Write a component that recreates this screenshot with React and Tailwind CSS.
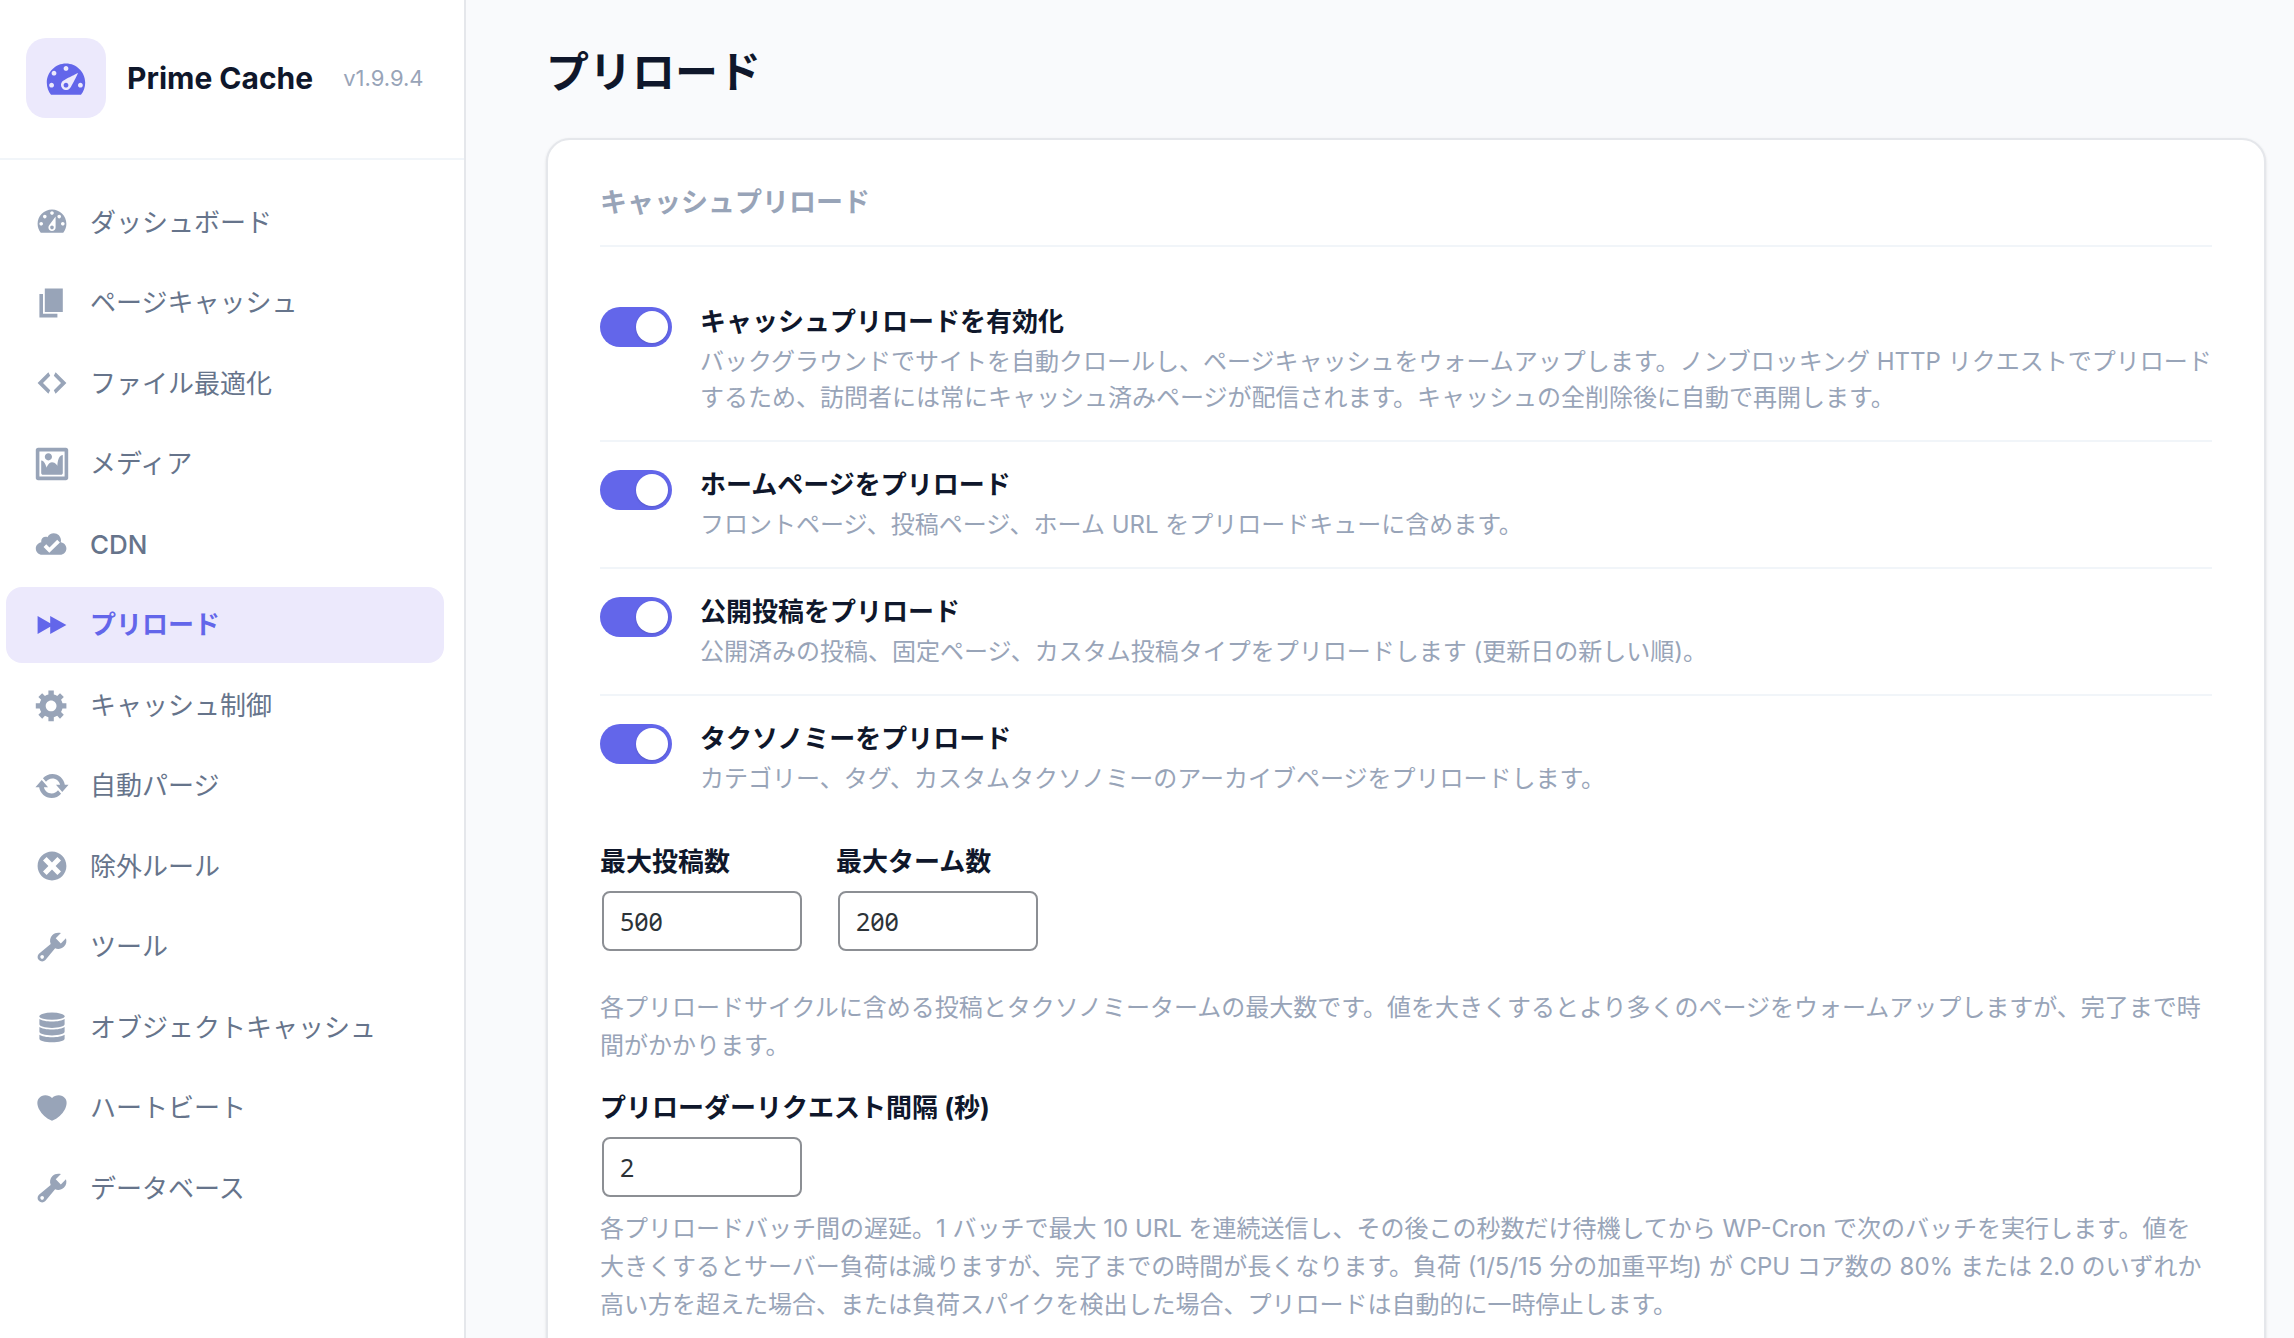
import { useState } from 'react';
import clsx from 'clsx';

const Icon = ({ className, children }) => (
  <svg viewBox="0 0 20 20" fill="currentColor" className={className} aria-hidden="true">
    {children}
  </svg>
);

const GaugeLogo = () => (
  <Icon className="size-12">
    <path d="M3.76 17.01h12.48C17.34 15.63 18 13.9 18 12c0-4.41-3.58-8-8-8s-8 3.59-8 8c0 1.9.66 3.63 1.76 5.01zM9 6c0-.55.45-1 1-1s1 .45 1 1c0 .56-.45 1-1 1s-1-.44-1-1zM4 8c0-.55.45-1 1-1s1 .45 1 1c0 .56-.45 1-1 1s-1-.44-1-1zm4.52 3.4c.84-.83 6.51-3.5 6.51-3.5s-2.66 5.68-3.49 6.51c-.84.84-2.18.84-3.02 0-.83-.83-.83-2.18 0-3.01zM3 13c0-.55.45-1 1-1s1 .45 1 1c0 .56-.45 1-1 1s-1-.44-1-1zm6 0c0 .56.45 1 1 1 .56 0 1-.44 1-1 0-.55-.44-1-1-1-.55 0-1 .45-1 1zm6 0c0-.55.45-1 1-1s1 .45 1 1c0 .56-.45 1-1 1s-1-.44-1-1z" />
  </Icon>
);

const wrench = (
  <path d="M16.68 9.77c-1.34 1.34-3.3 1.67-4.95.99l-5.41 6.52c-.99.99-2.59.99-3.58 0s-.99-2.59 0-3.57l6.52-5.42c-.68-1.65-.35-3.61.99-4.95 1.28-1.28 3.12-1.62 4.72-1.06l-2.89 2.89 2.82 2.82 2.86-2.87c.53 1.58.18 3.39-1.08 4.65zM3.81 16.21c.4.39 1.04.39 1.43 0 .4-.4.4-1.04 0-1.43-.39-.4-1.03-.4-1.43 0-.39.39-.39 1.03 0 1.43z" />
);

const navItems = [
  {
    id: 'dashboard',
    label: 'ダッシュボード',
    icon: (
      <path d="M3.76 16h12.48c1.1-1.37 1.76-3.11 1.76-5 0-4.42-3.58-8-8-8s-8 3.58-8 8c0 1.89.66 3.63 1.76 5zM10 4c.55 0 1 .45 1 1s-.45 1-1 1-1-.45-1-1 .45-1 1-1zM6 6c.55 0 1 .45 1 1s-.45 1-1 1-1-.45-1-1 .45-1 1-1zm8 0c.55 0 1 .45 1 1s-.45 1-1 1-1-.45-1-1 .45-1 1-1zm-5.37 5.55L12 7v6c0 1.1-.9 2-2 2s-2-.9-2-2c0-.57.24-1.08.63-1.45zM4 10c.55 0 1 .45 1 1s-.45 1-1 1-1-.45-1-1 .45-1 1-1zm12 0c.55 0 1 .45 1 1s-.45 1-1 1-1-.45-1-1 .45-1 1-1zm-5 3c0-.55-.45-1-1-1s-1 .45-1 1 .45 1 1 1 1-.45 1-1z" />
    ),
  },
  {
    id: 'page-cache',
    label: 'ページキャッシュ',
    icon: <path d="M6 15V2h10v13H6zm-1 1h8v2H3V5h2v11z" />,
  },
  {
    id: 'files',
    label: 'ファイル最適化',
    icon: <path d="M9 6l-4 4 4 4-1 2-6-6 6-6zm2 8l4-4-4-4 1-2 6 6-6 6z" />,
  },
  {
    id: 'media',
    label: 'メディア',
    icon: (
      <path d="M2.25 1h15.5c.69 0 1.25.56 1.25 1.25v15.5c0 .69-.56 1.25-1.25 1.25H2.25C1.56 19 1 18.44 1 17.75V2.25C1 1.56 1.56 1 2.25 1zM17 17V3H3v14h14zM10 6c0-1.1-.9-2-2-2s-2 .9-2 2 .9 2 2 2 2-.9 2-2zm3 5s0-6 3-6v10c0 .55-.45 1-1 1H5c-.55 0-1-.45-1-1V8c2 0 3 4 3 4s1-3 3-3 3 2 3 2z" />
    ),
  },
  {
    id: 'cdn',
    label: 'CDN',
    icon: (
      <path
        fillRule="evenodd"
        d="M14.8 9c.1-.3.2-.6.2-1 0-2.2-1.8-4-4-4-1.5 0-2.9.9-3.5 2.2-.3-.1-.7-.2-1-.2C5.1 6 4 7.1 4 8.5c0 .2 0 .4.1.5-1.8.3-3.1 1.7-3.1 3.5C1 14.4 2.6 16 4.5 16h10c1.9 0 3.5-1.6 3.5-3.5 0-1.8-1.4-3.3-3.2-3.5zm-6.3 5.9l-3.2-3.2 1.5-1.5 1.8 1.8 4.3-4.3 1.5 1.5-5.9 5.7z"
      />
    ),
  },
  {
    id: 'preload',
    label: 'プリロード',
    icon: <path d="M2 15V5l7 4V5l9 5-9 5v-4z" />,
  },
  {
    id: 'cache-control',
    label: 'キャッシュ制御',
    icon: (
      <path d="M18 12h-2.18c-.17.7-.44 1.35-.81 1.93l1.54 1.54-2.1 2.1-1.54-1.54c-.58.36-1.23.63-1.91.79V19H8v-2.18c-.68-.16-1.33-.43-1.91-.79l-1.54 1.54-2.12-2.12 1.54-1.54c-.36-.58-.63-1.23-.79-1.91H1V9.03h2.17c.16-.7.44-1.35.8-1.94L2.43 5.55l2.1-2.1 1.54 1.54c.58-.37 1.24-.64 1.93-.81V2h3v2.18c.68.16 1.33.43 1.91.79l1.54-1.54 2.12 2.12-1.54 1.54c.36.59.64 1.24.8 1.94H18V12zm-8.5 1.5c1.66 0 3-1.34 3-3s-1.34-3-3-3-3 1.34-3 3 1.34 3 3 3z" />
    ),
  },
  {
    id: 'purge',
    label: '自動パージ',
    icon: (
      <path d="M10.2 3.28c3.53 0 6.43 2.61 6.92 6h2.08l-3.5 4-3.5-4h2.32c-.45-1.97-2.21-3.45-4.32-3.45-1.45 0-2.73.71-3.54 1.78L4.95 5.66C6.23 4.2 8.11 3.28 10.2 3.28zm-.4 13.44c-3.52 0-6.43-2.61-6.92-6H.8l3.5-4c1.17 1.33 2.33 2.67 3.5 4H5.48c.45 1.97 2.21 3.45 4.32 3.45 1.45 0 2.73-.71 3.54-1.78l1.71 1.95c-1.28 1.46-3.15 2.38-5.25 2.38z" />
    ),
  },
  {
    id: 'exclusions',
    label: '除外ルール',
    icon: (
      <path d="M10 2c4.42 0 8 3.58 8 8s-3.58 8-8 8-8-3.58-8-8 3.58-8 8-8zm5 11l-3-3 3-3-2-2-3 3-3-3-2 2 3 3-3 3 2 2 3-3 3 3z" />
    ),
  },
  { id: 'tools', label: 'ツール', icon: wrench },
  {
    id: 'object-cache',
    label: 'オブジェクトキャッシュ',
    icon: (
      <>
        <ellipse cx="10" cy="4" rx="7" ry="2" />
        <path d="M3 5.6c1.2.9 4 1.4 7 1.4s5.8-.5 7-1.4V8.5c0 1.1-3.1 2-7 2s-7-.9-7-2z" />
        <path d="M3 10c1.2.9 4 1.4 7 1.4s5.8-.5 7-1.4v2.7c0 1.1-3.1 2-7 2s-7-.9-7-2z" />
        <path d="M3 14.3c1.2.9 4 1.4 7 1.4s5.8-.5 7-1.4v2.2c0 1.1-3.1 2-7 2s-7-.9-7-2z" />
      </>
    ),
  },
  {
    id: 'heartbeat',
    label: 'ハートビート',
    icon: (
      <path d="M10 17.12c3.33-1.4 5.74-3.79 7.04-6.21 1.28-2.41 1.46-4.81.32-6.25-1.03-1.29-2.37-1.78-3.73-1.74s-2.68.63-3.63 1.46c-.95-.83-2.27-1.42-3.63-1.46s-2.7.45-3.73 1.74c-1.14 1.44-.96 3.84.34 6.25 1.28 2.42 3.69 4.81 7.02 6.21z" />
    ),
  },
  { id: 'database', label: 'データベース', icon: wrench },
];

const toggles = [
  {
    id: 'enable',
    title: 'キャッシュプリロードを有効化',
    description:
      'バックグラウンドでサイトを自動クロールし、ページキャッシュをウォームアップします。ノンブロッキング HTTP リクエストでプリロードするため、訪問者には常にキャッシュ済みページが配信されます。キャッシュの全削除後に自動で再開します。',
  },
  {
    id: 'home',
    title: 'ホームページをプリロード',
    description: 'フロントページ、投稿ページ、ホーム URL をプリロードキューに含めます。',
  },
  {
    id: 'posts',
    title: '公開投稿をプリロード',
    description: '公開済みの投稿、固定ページ、カスタム投稿タイプをプリロードします (更新日の新しい順)。',
  },
  {
    id: 'taxonomies',
    title: 'タクソノミーをプリロード',
    description: 'カテゴリー、タグ、カスタムタクソノミーのアーカイブページをプリロードします。',
  },
];

const Sidebar = () => (
  <aside className="flex w-[466px] shrink-0 flex-col border-r-2 border-gray-200 bg-white">
    <div className="flex h-40 shrink-0 items-start border-b-2 border-slate-100 pt-[38px] pl-[26px]">
      <div className="flex size-20 items-center justify-center rounded-[20px] bg-[#ece9fc] text-[#6366ea]">
        <GaugeLogo />
      </div>
      <div className="ml-[21px] flex h-20 items-center gap-[30px]">
        <span className="text-[30px] font-bold text-slate-900">Prime Cache</span>
        <span className="text-[22px] text-[#98a4b8]">v1.9.9.4</span>
      </div>
    </div>

    <nav className="flex flex-1 flex-col justify-between pt-6 pr-5 pb-28 pl-[6px]">
      {navItems.map(({ id, label, icon }) => {
        const active = id === 'preload';
        return (
          <a
            key={id}
            href={`#${id}`}
            aria-current={active ? 'page' : undefined}
            className={clsx(
              'flex h-[76px] items-center gap-5 rounded-2xl pl-7 text-[26px]',
              active ? 'bg-[#ece9fc] font-bold text-[#6366ea]' : 'text-[#66748b]',
              id === 'cdn' && 'font-medium'
            )}
          >
            <Icon className={clsx('size-9 shrink-0', active ? 'text-[#6366ea]' : 'text-[#98a4b8]')}>{icon}</Icon>
            {label}
          </a>
        );
      })}
    </nav>
  </aside>
);

const ToggleRow = ({ id, title, description, checked, onChange }) => (
  <div className="flex items-start gap-7 border-b-2 border-slate-100 py-6 last:border-b-0">
    <input
      id={id}
      type="checkbox"
      role="switch"
      checked={checked}
      onChange={onChange}
      aria-describedby={`${id}-help`}
      className="mt-1 h-10 w-[72px] shrink-0 cursor-pointer appearance-none rounded-full bg-slate-300 p-1 transition-colors before:block before:size-8 before:rounded-full before:bg-white before:shadow-sm before:transition-transform checked:bg-[#6366ea] checked:before:translate-x-8"
    />
    <div className="flex flex-col gap-[3px]">
      <label htmlFor={id} className="text-[26px] leading-[38px] font-bold text-slate-900">
        {title}
      </label>
      <p id={`${id}-help`} className="text-2xl leading-9 text-[#98a4b8]">
        {description}
      </p>
    </div>
  </div>
);

const NumberField = ({ id, label, defaultValue }) => (
  <div className="flex flex-col items-start gap-[10px]">
    <label htmlFor={id} className="text-[26px] leading-[38px] font-bold text-slate-900">
      {label}
    </label>
    <input
      id={id}
      type="text"
      inputMode="numeric"
      defaultValue={defaultValue}
      className="mx-[2px] h-[60px] w-[200px] rounded-lg border-2 border-[#8c8f94] bg-white px-4 font-['Noto_Sans',sans-serif] text-[25px] text-[#2c3338] slashed-zero"
    />
  </div>
);

const App = () => {
  const [enabled, setEnabled] = useState({ enable: true, home: true, posts: true, taxonomies: true });

  return (
    <div
      lang="ja"
      className="flex h-screen overflow-hidden bg-[#f9fafc] font-['Inter','Noto_Sans_CJK_JP',sans-serif]"
    >
      <Sidebar />

      <main className="min-w-0 flex-1 overflow-hidden pt-10 pr-7 pl-20">
        <h1 className="text-[43px] leading-[64px] font-bold text-slate-900">プリロード</h1>

        <section className="mt-[34px] rounded-3xl border-2 border-gray-200 bg-white px-[52px] pt-[45px] pb-[52px] shadow-sm">
          <h2 className="border-b-2 border-slate-100 pb-6 text-[27px] leading-9 font-bold text-[#98a4b8]">
            キャッシュプリロード
          </h2>

          <div className="pt-8">
            {toggles.map((item) => (
              <ToggleRow
                key={item.id}
                {...item}
                checked={enabled[item.id]}
                onChange={(e) => setEnabled({ ...enabled, [item.id]: e.target.checked })}
              />
            ))}
          </div>

          {/* Limits */}
          <div className="mt-[22px] flex gap-8">
            <NumberField id="max-posts" label="最大投稿数" defaultValue="500" />
            <NumberField id="max-terms" label="最大ターム数" defaultValue="200" />
          </div>
          <p className="mt-[38px] text-2xl leading-[38px] text-[#98a4b8]">
            各プリロードサイクルに含める投稿とタクソノミータームの最大数です。値を大きくするとより多くのページをウォームアップしますが、完了まで時間がかかります。
          </p>

          {/* Delay between batches */}
          <div className="mt-6">
            <NumberField id="interval" label="プリローダーリクエスト間隔 (秒)" defaultValue="2" />
          </div>
          <p className="mt-[13px] text-2xl leading-[38px] text-[#98a4b8]">
            各プリロードバッチ間の遅延。1 バッチで最大 10 URL を連続送信し、その後この秒数だけ待機してから WP-Cron
            で次のバッチを実行します。値を大きくするとサーバー負荷は減りますが、完了までの時間が長くなります。負荷 (1/5/15
            分の加重平均) が CPU コア数の 80% または 2.0
            のいずれか高い方を超えた場合、または負荷スパイクを検出した場合、プリロードは自動的に一時停止します。
          </p>
        </section>
      </main>
    </div>
  );
};

export default App;
